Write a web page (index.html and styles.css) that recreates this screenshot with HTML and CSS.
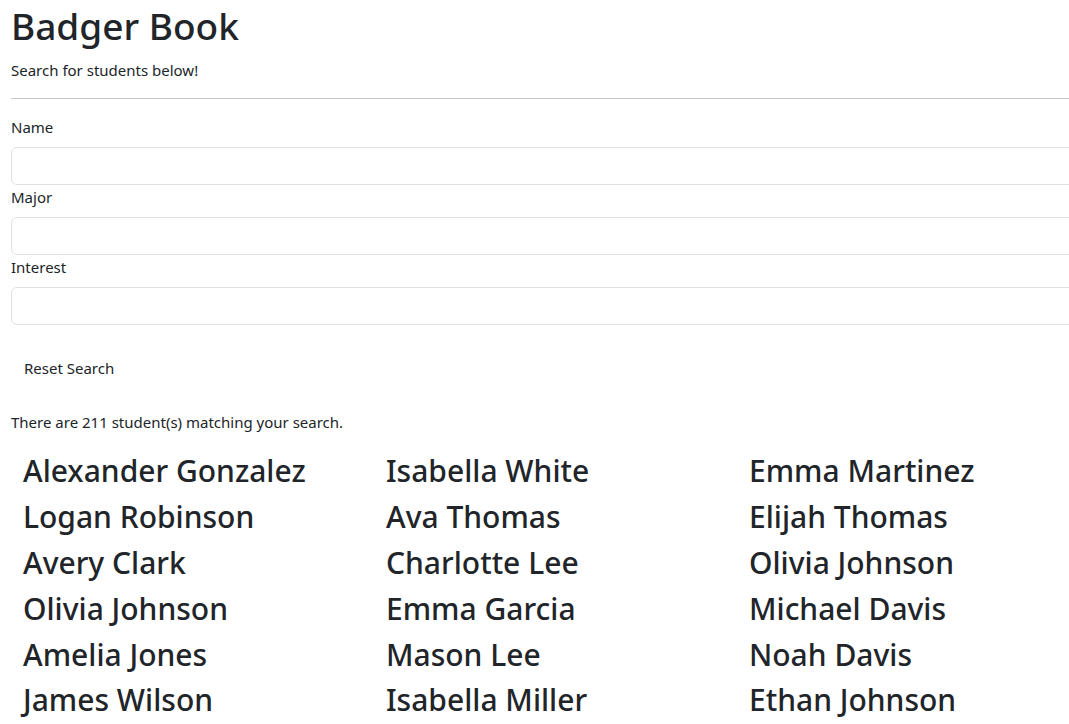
FILE: index.html
```html
<!DOCTYPE html>
<html lang="en">
<head>
<meta charset="utf-8">
<title>Badger Book</title>
<link rel="stylesheet" href="styles.css">
</head>
<body>
<div class="page">
  <h1 class="title">Badger Book</h1>
  <p class="subtitle">Search for students below!</p>
  <hr class="divider">
  <form class="search">
    <label class="field-label" for="name">Name</label>
    <input class="field-input" id="name" type="text">
    <label class="field-label" for="major">Major</label>
    <input class="field-input" id="major" type="text">
    <label class="field-label" for="interest">Interest</label>
    <input class="field-input" id="interest" type="text">
    <button class="reset-btn" type="button">Reset Search</button>
  </form>
  <p class="count">There are 211 student(s) matching your search.</p>
  <div class="students">
    <h2 class="student">Alexander Gonzalez</h2>
    <h2 class="student">Isabella White</h2>
    <h2 class="student">Emma Martinez</h2>
    <h2 class="student">Logan Robinson</h2>
    <h2 class="student">Ava Thomas</h2>
    <h2 class="student">Elijah Thomas</h2>
    <h2 class="student">Avery Clark</h2>
    <h2 class="student">Charlotte Lee</h2>
    <h2 class="student">Olivia Johnson</h2>
    <h2 class="student">Olivia Johnson</h2>
    <h2 class="student">Emma Garcia</h2>
    <h2 class="student">Michael Davis</h2>
    <h2 class="student">Amelia Jones</h2>
    <h2 class="student">Mason Lee</h2>
    <h2 class="student">Noah Davis</h2>
    <h2 class="student">James Wilson</h2>
    <h2 class="student">Isabella Miller</h2>
    <h2 class="student">Ethan Johnson</h2>
  </div>
</div>
</body>
</html>
```
FILE: styles.css
```css
html, body {
  margin: 0;
  padding: 0;
  background: #fff;
  overflow-x: hidden;
}
body {
  font-family: "Noto Sans", "Open Sans", sans-serif;
  font-size: 15px;
  line-height: 24px;
  color: #212529;
}
.page {
  width: 1101px;
  padding: 0 0 0 11px;
}
.title {
  margin: 0 0 8px;
  padding-top: 2px;
  font-size: 37px;
  font-weight: 500;
  line-height: 48px;
}
.subtitle {
  margin: 0 0 16px;
}
.divider {
  margin: 0 0 16px;
  border: 0;
  border-top: 1px solid #c8c9ca;
  height: 0;
}
.search {
  display: flex;
  flex-direction: column;
  align-items: flex-start;
}
.field-label {
  display: block;
  margin-bottom: 8px;
}
.field-input {
  display: block;
  box-sizing: border-box;
  width: 100%;
  height: 38px;
  margin: 0;
  padding: 6px 12px;
  border: 1px solid #dee2e6;
  border-radius: 6px;
  font: inherit;
  background: #fff;
}
.reset-btn {
  margin-top: 24px;
  height: 38px;
  padding: 6px 13px;
  border: 0;
  background: transparent;
  font: inherit;
  color: #212529;
  line-height: 24px;
}
.count {
  margin: 23px 0 0;
}
.students {
  display: grid;
  grid-template-columns: repeat(3, 363px);
  grid-auto-rows: 45.9px;
  padding-left: 12px;
  margin-top: 18px;
}
.student {
  margin: 0;
  font-size: 30px;
  font-weight: 500;
  line-height: 38px;
  white-space: nowrap;
}
```
